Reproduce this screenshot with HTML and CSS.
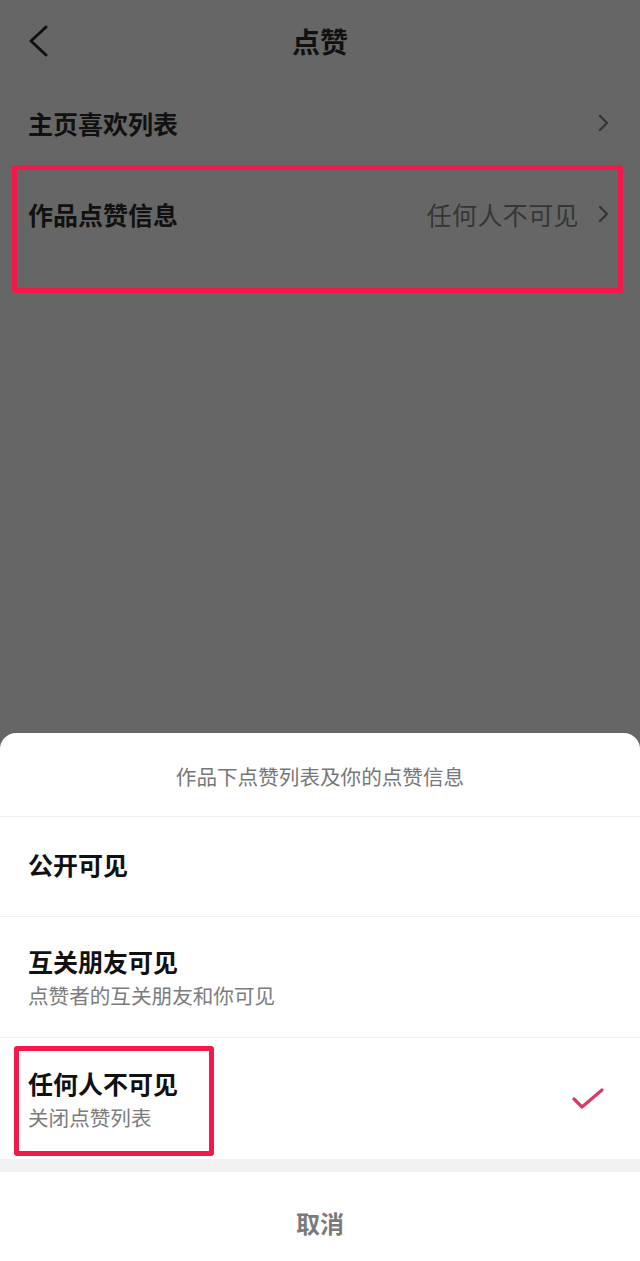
FILE: index.html
```html
<!DOCTYPE html>
<html lang="zh-CN">
<head>
<meta charset="utf-8">
<title>点赞</title>
<link rel="stylesheet" href="styles.css">
</head>
<body>
<div class="page">
  <div class="dim">
    <div class="topbar">
      <div class="back">
        <svg width="24" height="34" viewBox="0 0 24 34"><polyline points="18,2 3,16 18,30" fill="none" stroke="#111" stroke-width="3" stroke-linecap="round" stroke-linejoin="round"/></svg>
      </div>
      <div class="title">点赞</div>
      <div></div>
    </div>
    <div class="row row-first">
      <span class="row-label">主页喜欢列表</span>
      <span class="row-right">
        <svg class="chev" width="12" height="18" viewBox="0 0 12 18"><polyline points="2,2 9,9 2,16" fill="none" stroke="#363636" stroke-width="2.4" stroke-linecap="round" stroke-linejoin="round"/></svg>
      </span>
    </div>
    <div class="row row-second">
      <span class="row-label">作品点赞信息</span>
      <span class="row-right">
        <span class="row-value">任何人不可见</span>
        <svg class="chev" width="12" height="18" viewBox="0 0 12 18"><polyline points="2,2 9,9 2,16" fill="none" stroke="#363636" stroke-width="2.4" stroke-linecap="round" stroke-linejoin="round"/></svg>
      </span>
    </div>
    <div class="mark mark-top"></div>
  </div>

  <div class="sheet">
    <div class="sheet-head">作品下点赞列表及你的点赞信息</div>
    <div class="opt opt-single">
      <div class="opt-title">公开可见</div>
    </div>
    <div class="opt opt-double">
      <div class="opt-text">
        <div class="opt-title">互关朋友可见</div>
        <div class="opt-sub">点赞者的互关朋友和你可见</div>
      </div>
    </div>
    <div class="opt opt-double opt-last">
      <div class="opt-text">
        <div class="opt-title">任何人不可见</div>
        <div class="opt-sub">关闭点赞列表</div>
      </div>
      <svg class="check" width="36" height="28" viewBox="0 0 36 28"><polyline points="4,13 12,21 32,4" fill="none" stroke="#d93a63" stroke-width="3.2" stroke-linecap="round" stroke-linejoin="round"/></svg>
      <div class="mark mark-bottom"></div>
    </div>
    <div class="band"></div>
    <div class="cancel">取消</div>
  </div>
</div>
</body>
</html>
```

FILE: styles.css
```css
* { box-sizing: border-box; }
html, body { margin: 0; padding: 0; }
body {
  width: 640px;
  height: 1261px;
  background: #666666;
  font-family: "Noto Sans CJK SC", "Noto Sans", sans-serif;
  overflow: hidden;
}
.page {
  height: 1261px;
  display: flex;
  flex-direction: column;
}
.dim {
  position: relative;
  height: 733px;
  flex: none;
}
.topbar {
  height: 82px;
  display: grid;
  grid-template-columns: 80px 1fr 80px;
  align-items: center;
}
.back {
  padding-left: 28px;
  display: flex;
  align-items: center;
  padding-top: 2px;
}
.title {
  text-align: center;
  font-size: 28px;
  font-weight: 700;
  color: #111;
  line-height: 34px;
}
.row {
  display: flex;
  align-items: center;
  justify-content: space-between;
  padding: 0 30px 0 28px;
}
.row-first { height: 82px; }
.row-second { height: 100px; }
.row-label {
  font-size: 25px;
  font-weight: 700;
  color: #111;
  line-height: 30px;
}
.row-right {
  display: flex;
  align-items: center;
  gap: 19px;
}
.row-value {
  font-size: 25px;
  letter-spacing: 0.4px;
  color: #363636;
  line-height: 30px;
}
.chev { display: block; }
.mark {
  position: absolute;
  border: 5px solid #f0194a;
  border-radius: 3px;
  pointer-events: none;
}
.mark-top {
  left: 12px;
  top: 165px;
  width: 611px;
  height: 128px;
}
.sheet {
  flex: 1;
  background: #ffffff;
  border-radius: 16px 16px 0 0;
  display: flex;
  flex-direction: column;
}
.sheet-head {
  height: 84px;
  display: flex;
  align-items: center;
  justify-content: center;
  font-size: 20.6px;
  color: #777777;
  border-bottom: 1px solid #efefef;
  padding-top: 2px;
}
.opt {
  position: relative;
  display: flex;
  align-items: center;
  justify-content: space-between;
  padding: 0 34px 0 28px;
  border-bottom: 1px solid #efefef;
}
.opt-single { height: 100px; padding-bottom: 6px; }
.opt-double { height: 121px; }
.opt-last { border-bottom: none; height: 121px; }
.opt-title {
  font-size: 25px;
  font-weight: 700;
  color: #111;
  line-height: 30px;
}
.opt-text {
  display: flex;
  flex-direction: column;
  gap: 6px;
}
.opt-sub {
  font-size: 20.6px;
  color: #7c7c7c;
  line-height: 26px;
}
.check { display: block; margin-top: 2px; }
.mark-bottom {
  left: 14px;
  top: 8px;
  width: 200px;
  height: 110px;
}
.band {
  height: 13px;
  background: #f2f2f4;
  flex: none;
}
.cancel {
  flex: 1;
  display: flex;
  align-items: center;
  justify-content: center;
  padding-top: 12px;
  font-size: 24px;
  font-weight: 700;
  color: #7a7a7a;
}
```
